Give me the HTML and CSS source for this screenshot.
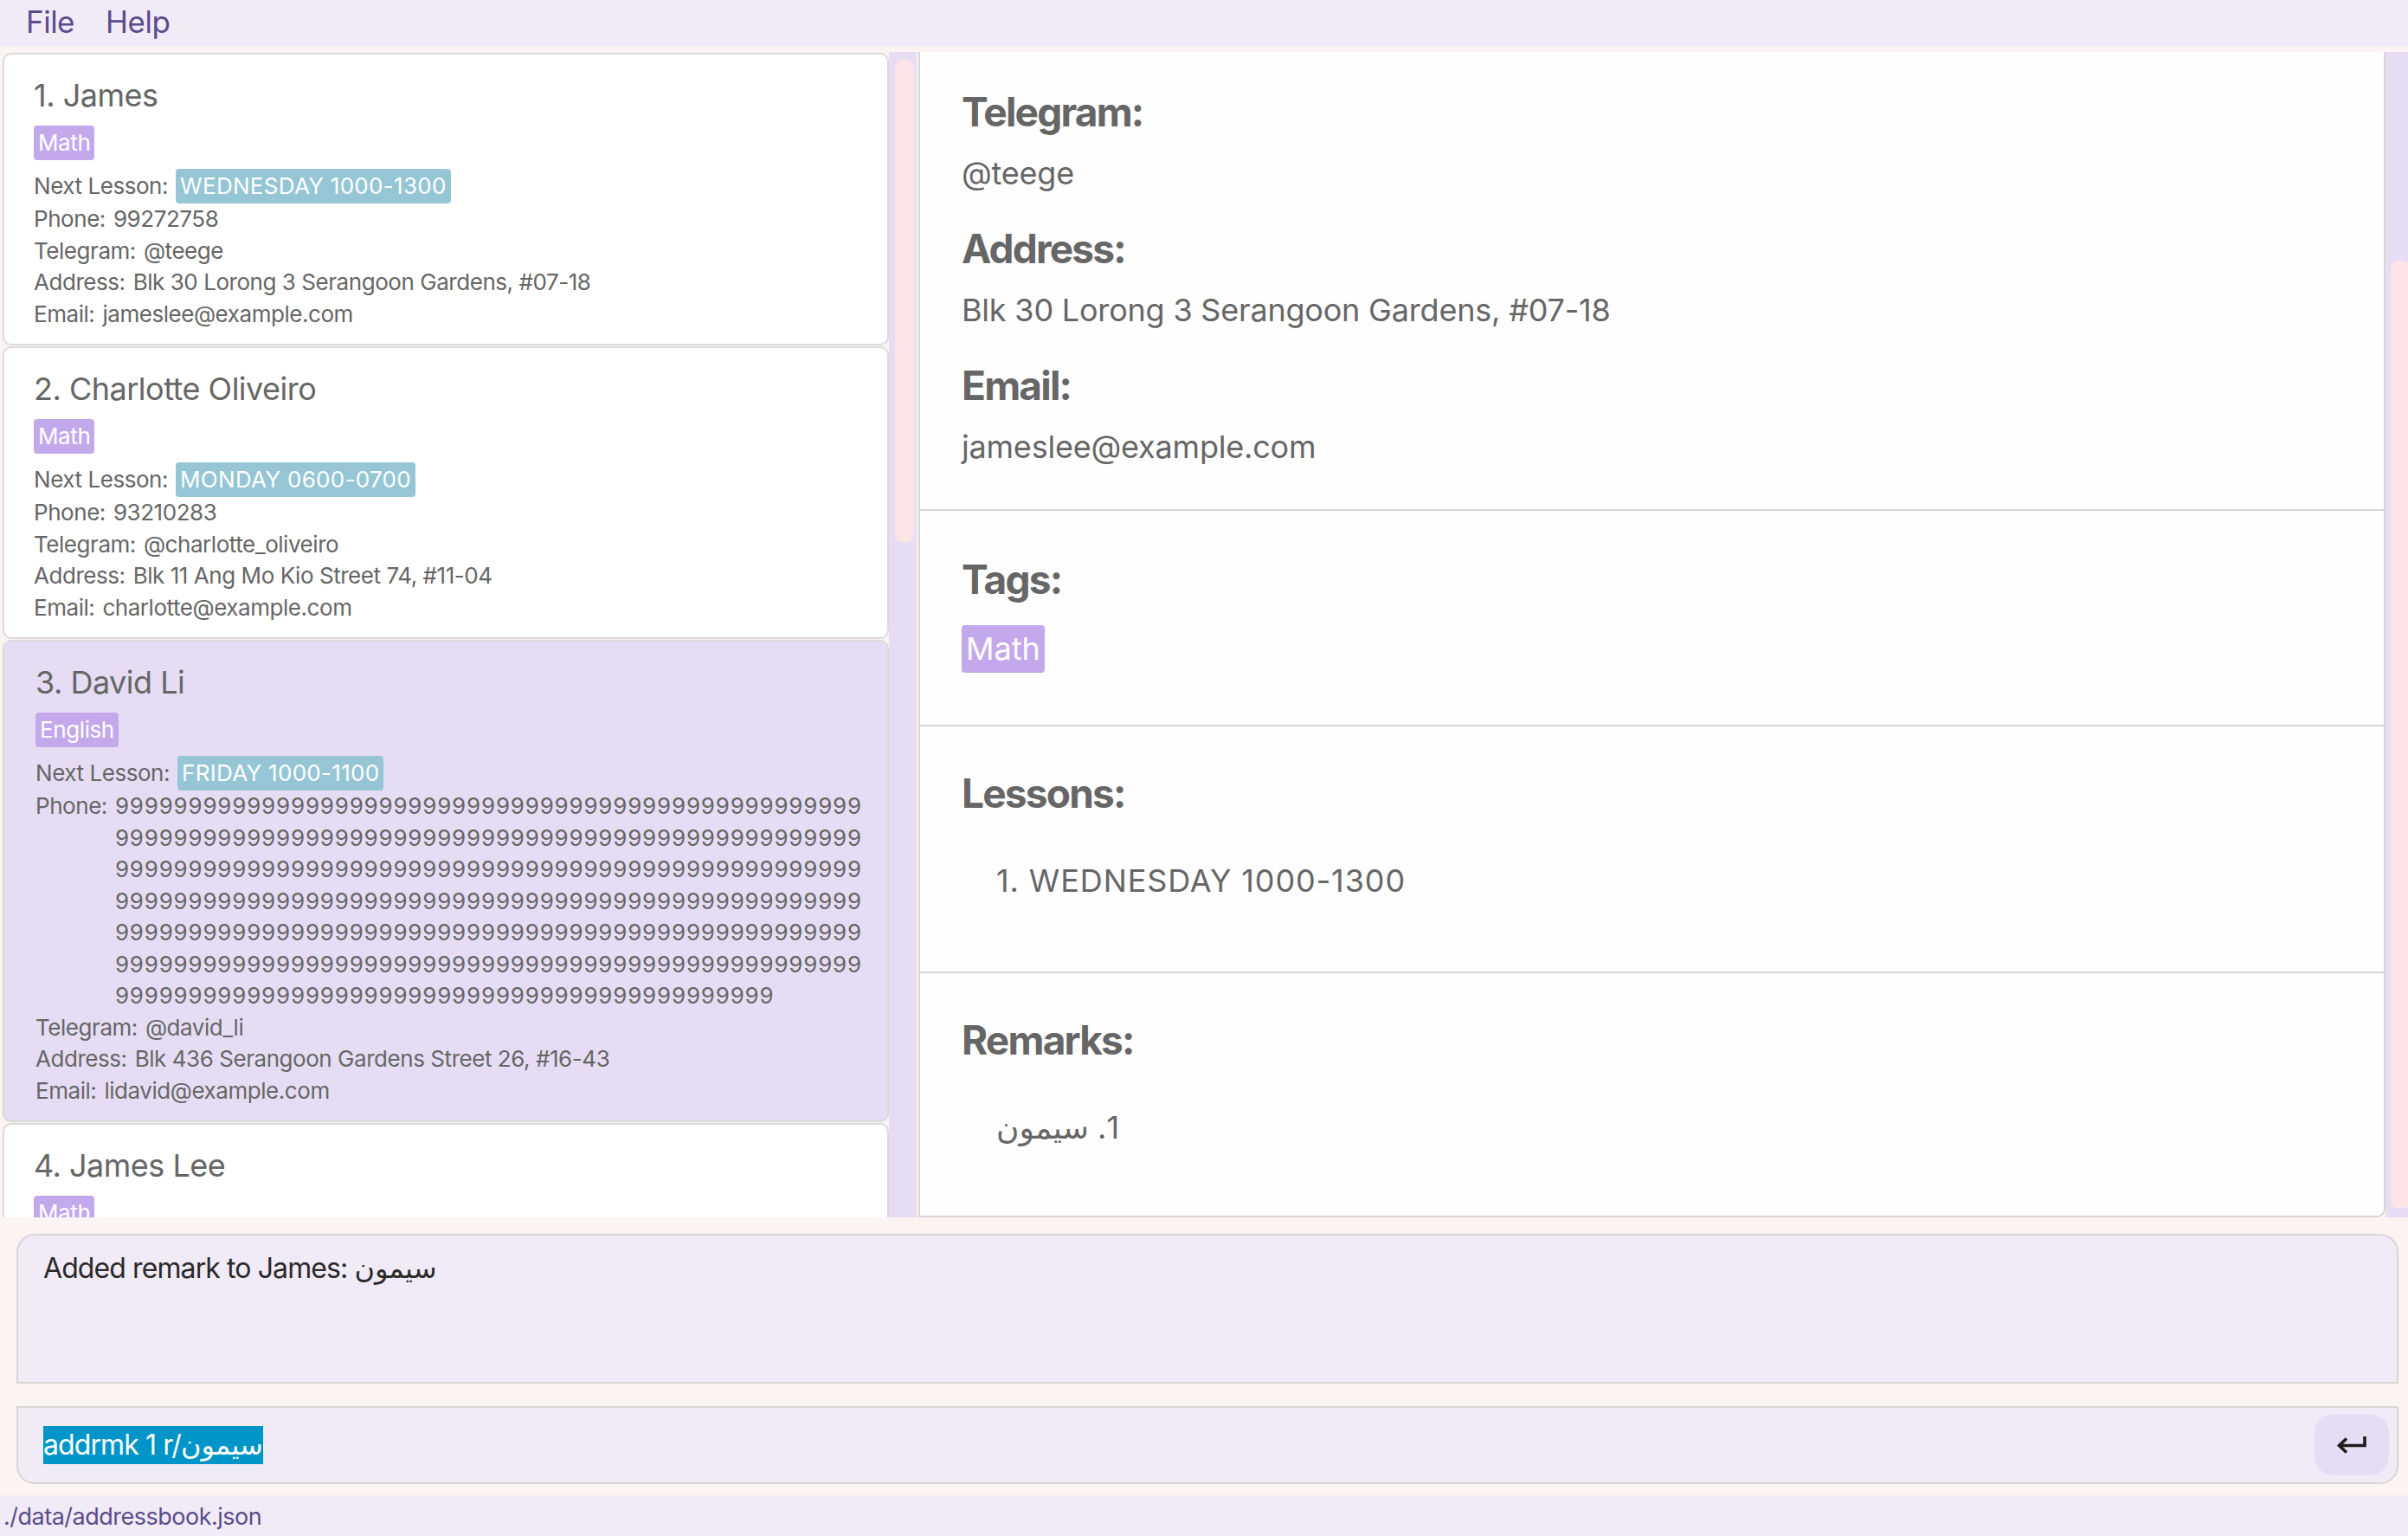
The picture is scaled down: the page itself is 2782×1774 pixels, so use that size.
FILE: index.html
```html
<!DOCTYPE html>
<html lang="en">
<head>
<meta charset="utf-8">
<title>Address Book</title>
<link rel="stylesheet" href="styles.css">
</head>
<body>
<div class="app">
  <div class="menubar">
    <span class="menu-item">File</span>
    <span class="menu-item">Help</span>
  </div>
  <div class="main">
    <div class="list-pane">
      <div class="list">
        <div class="card">
          <div class="name">1. James</div>
          <div class="tags"><span class="tag">Math</span></div>
          <div class="row lesson-row"><span class="label">Next Lesson:</span><span class="badge">WEDNESDAY 1000-1300</span></div>
          <div class="row"><span class="label">Phone:</span><span class="value">99272758</span></div>
          <div class="row"><span class="label">Telegram:</span><span class="value">@teege</span></div>
          <div class="row"><span class="label">Address:</span><span class="value">Blk 30 Lorong 3 Serangoon Gardens, #07-18</span></div>
          <div class="row"><span class="label">Email:</span><span class="value">jameslee@example.com</span></div>
        </div>
        <div class="card">
          <div class="name">2. Charlotte Oliveiro</div>
          <div class="tags"><span class="tag">Math</span></div>
          <div class="row lesson-row"><span class="label">Next Lesson:</span><span class="badge">MONDAY 0600-0700</span></div>
          <div class="row"><span class="label">Phone:</span><span class="value">93210283</span></div>
          <div class="row"><span class="label">Telegram:</span><span class="value">@charlotte_oliveiro</span></div>
          <div class="row"><span class="label">Address:</span><span class="value">Blk 11 Ang Mo Kio Street 74, #11-04</span></div>
          <div class="row"><span class="label">Email:</span><span class="value">charlotte@example.com</span></div>
        </div>
        <div class="card selected">
          <div class="name">3. David Li</div>
          <div class="tags"><span class="tag">English</span></div>
          <div class="row lesson-row"><span class="label">Next Lesson:</span><span class="badge">FRIDAY 1000-1100</span></div>
          <div class="row"><span class="label">Phone:</span><span class="value long">999999999999999999999999999999999999999999999999999999999999999999999999999999999999999999999999999999999999999999999999999999999999999999999999999999999999999999999999999999999999999999999999999999999999999999999999999999999999999999999999999999999999999999999999999999999999999999999999999999999999999999999999999999999999999999999999999999999999999</span></div>
          <div class="row"><span class="label">Telegram:</span><span class="value">@david_li</span></div>
          <div class="row"><span class="label">Address:</span><span class="value">Blk 436 Serangoon Gardens Street 26, #16-43</span></div>
          <div class="row"><span class="label">Email:</span><span class="value">lidavid@example.com</span></div>
        </div>
        <div class="card">
          <div class="name">4. James Lee</div>
          <div class="tags"><span class="tag">Math</span></div>
        </div>
      </div>
      <div class="vscroll list-scroll"><div class="thumb"></div></div>
    </div>
    <div class="detail-pane">
      <div class="detail">
        <section class="section first">
          <h2 class="heading">Telegram:</h2>
          <p class="dvalue">@teege</p>
          <h2 class="heading">Address:</h2>
          <p class="dvalue">Blk 30 Lorong 3 Serangoon Gardens, #07-18</p>
          <h2 class="heading">Email:</h2>
          <p class="dvalue">jameslee@example.com</p>
        </section>
        <section class="section tags-section">
          <h2 class="heading">Tags:</h2>
          <div class="dtags"><span class="dtag">Math</span></div>
        </section>
        <section class="section list-section">
          <h2 class="heading">Lessons:</h2>
          <div class="ditem lesson-item">1. WEDNESDAY 1000-1300</div>
        </section>
        <section class="section list-section last">
          <h2 class="heading">Remarks:</h2>
          <div class="ditem rtl" dir="rtl">1. سيمون</div>
        </section>
      </div>
      <div class="vscroll detail-scroll"><div class="thumb"></div></div>
    </div>
  </div>
  <div class="result">Added remark to James: سيمون</div>
  <div class="command">
    <span class="command-text">addrmk 1 r/سيمون</span>
    <button class="send" type="button" aria-label="Send">
      <svg width="38" height="26" viewBox="0 0 38 26" fill="none" stroke="#1c1c1c" stroke-width="3.6" stroke-linecap="butt" stroke-linejoin="miter">
        <path d="M34 3 V13.5 H5"/>
        <path d="M13 5.5 L4.5 13.5 L13 21.5"/>
      </svg>
    </button>
  </div>
  <div class="status">./data/addressbook.json</div>
</div>
</body>
</html>
```
FILE: styles.css
```css
* { box-sizing: border-box; }
html, body { margin: 0; padding: 0; }
body {
  width: 2782px;
  height: 1774px;
  overflow: hidden;
  background: #fcf3f3;
  font-family: Inter, "Noto Sans", "DejaVu Sans", sans-serif;
  color: #666666;
}
.app {
  display: flex;
  flex-direction: column;
  height: 1774px;
}

/* menu bar */
.menubar {
  height: 55px;
  background: #f1ebf7;
  display: flex;
  align-items: center;
  gap: 36px;
  padding-left: 30px;
  margin-bottom: 6px;
}
.menu-item {
  font-size: 35px;
  color: #5b4b8c;
  letter-spacing: -0.5px;
  line-height: 1;
  padding-bottom: 4px;
}

/* main split */
.main {
  height: 1346px;
  display: flex;
  flex: none;
}
.list-pane {
  width: 1061px;
  display: flex;
  flex: none;
}
.list {
  width: 1027px;
  padding: 1px 0 0 3px;
  overflow: hidden;
}
.vscroll {
  background: #e6ddf5;
  position: relative;
}
.list-scroll {
  width: 32px;
  margin-right: 2px;
}
.list-scroll .thumb {
  position: absolute;
  left: 7px;
  top: 9px;
  width: 22px;
  height: 558px;
  border-radius: 10px;
  background: #fde4e6;
}

/* cards */
.card {
  width: 1024px;
  background: #ffffff;
  border: 2px solid #dadada;
  border-radius: 10px;
  padding: 25px 18px 16px 34px;
  margin-bottom: 1px;
}
.card.selected {
  background: #e6ddf5;
  padding-left: 36px;
}
.name {
  font-size: 36px;
  line-height: 44px;
  color: #666666;
  letter-spacing: -0.5px;
}
.tags {
  display: flex;
  margin-top: 13px;
  height: 40px;
}
.tag {
  background: #c3a9ec;
  color: #ffffff;
  font-size: 26px;
  line-height: 40px;
  padding: 0 5px;
  border-radius: 4px;
  letter-spacing: -0.4px;
}
.row {
  display: flex;
  font-size: 26px;
  line-height: 36.5px;
  letter-spacing: -0.45px;
}
.label {
  flex: none;
  margin-right: 9px;
}
.value {
  flex: 1;
  min-width: 0;
}
.value.long {
  word-break: break-all;
  letter-spacing: 0.8px;
  max-width: 872px;
}
.lesson-row {
  margin-top: 10px;
  line-height: 40px;
  align-items: center;
}
.badge {
  background: #96c6d5;
  color: #ffffff;
  padding: 0 5px;
  border-radius: 4px;
  line-height: 40px;
  letter-spacing: 0.3px;
}

/* detail pane */
.detail-pane {
  flex: 1;
  display: flex;
}
.detail {
  flex: 1;
  background: #fefefe;
  border: 2px solid #d6d6d6;
  border-top: none;
  border-bottom-right-radius: 10px;
  overflow: hidden;
}
.detail-scroll {
  width: 26px;
}
.detail-scroll .thumb {
  position: absolute;
  left: 6px;
  top: 241px;
  width: 22px;
  height: 1095px;
  border-radius: 9px;
  background: #fde4e6;
}
.section {
  padding: 49px 0 0 48px;
  border-bottom: 2px solid #d6d6d6;
}
.section.last { border-bottom: none; }
.section.first {
  padding-top: 41px;
  padding-bottom: 50px;
}
.heading {
  margin: 0;
  font-size: 46px;
  line-height: 56px;
  font-weight: 700;
  color: #666666;
  letter-spacing: -1.8px;
}
.dvalue {
  margin: 21px 0 37px;
  font-size: 36px;
  line-height: 44px;
  letter-spacing: -0.2px;
}
.dvalue:last-child { margin-bottom: 0; }
.tags-section {
  padding-top: 51px;
  padding-bottom: 60px;
}
.dtags {
  display: flex;
  margin-top: 25px;
}
.dtag {
  background: #c3a9ec;
  color: #ffffff;
  font-size: 36px;
  line-height: 55px;
  padding: 0 5px;
  border-radius: 4px;
  letter-spacing: 0;
}
.list-section {
  padding-top: 49px;
  padding-bottom: 83px;
}
.ditem {
  margin-top: 51px;
  padding-left: 40px;
  font-size: 36px;
  line-height: 44px;
  letter-spacing: -0.2px;
}
.lesson-item {
  letter-spacing: 0.9px;
}
.ditem.rtl {
  text-align: left;
}

/* result box */
.result {
  margin: 19px 11px 0 19px;
  height: 174px;
  background: #f1ebf7;
  border: 2px solid #d6d6d6;
  border-radius: 21px 21px 0 0;
  padding: 17px 29px;
  font-size: 32px;
  line-height: 42px;
  color: #2a2a2a;
  letter-spacing: -0.9px;
}

/* command box */
.command {
  margin: 26px 11px 0 19px;
  height: 91px;
  background: #f1ebf7;
  border: 2px solid #d6d6d6;
  border-radius: 0 0 21px 21px;
  display: flex;
  align-items: center;
  justify-content: space-between;
  padding: 0 9px 0 29px;
}
.command-text {
  background: #0095c8;
  color: #ffffff;
  font-size: 32px;
  line-height: 44px;
  letter-spacing: -0.9px;
}
.send {
  width: 86px;
  height: 71px;
  border: none;
  border-radius: 22px;
  background: #e6ddf5;
  display: flex;
  align-items: center;
  justify-content: center;
  padding: 0;
}

/* status bar */
.status {
  margin-top: 13px;
  flex: 1;
  background: #f1ebf7;
  padding: 3px 0 0 4px;
  font-size: 27px;
  line-height: 44px;
  color: #5b4b8c;
  letter-spacing: -0.5px;
}
```
